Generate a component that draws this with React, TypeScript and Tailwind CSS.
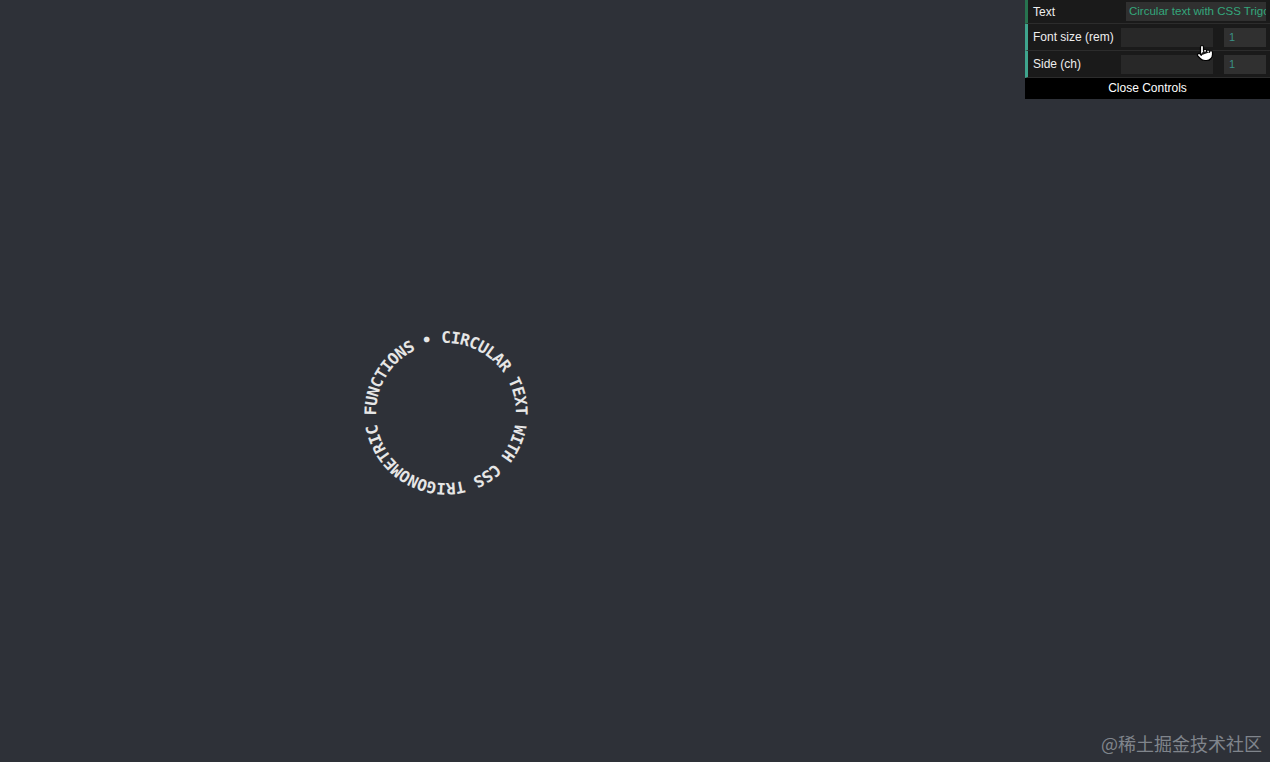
import { Pointer } from "lucide-react";

const TEXT = "CIRCULAR TEXT WITH CSS TRIGONOMETRIC FUNCTIONS • ";
const RADIUS = 75;

function CircularText() {
    const chars = TEXT.split("");
    return (
        <div className="relative w-[166px] h-[166px] text-[16px] font-bold text-[#e6e6e6]" style={{ fontFamily: '"DejaVu Sans Mono", monospace' }}>
            {chars.map((ch, idx) => {
                const angle = (idx * 360) / chars.length;
                return (
                    <span
                        key={idx}
                        className="absolute left-1/2 top-1/2 leading-none whitespace-pre"
                        style={{ transform: `translate(-50%, -50%) rotate(${angle}deg) translateY(-${RADIUS}px)` }}
                    >
                        {ch}
                    </span>
                );
            })}
        </div>
    );
}

function Row({ label, border, children, h }: { label: string; border: string; children: React.ReactNode; h: string }) {
    return (
        <div className={`flex items-center border-l-[3px] border-b border-b-[#2c2c2c] ${border} ${h}`}>
            <div className="w-[93px] pl-[5px] shrink-0 text-[#eeeeee] text-[12px] whitespace-nowrap">{label}</div>
            {children}
        </div>
    );
}

function SliderRow({ label }: { label: string }) {
    return (
        <Row label={label} border="border-l-[#3fa58e]" h="h-[27px]">
            <div className="w-[92px] h-[19px] bg-[#282828] shrink-0" />
            <div className="ml-[11px] w-[42px] h-[19px] bg-[#303030] text-[#3b8f86] pl-[5px] flex items-center">1</div>
        </Row>
    );
}

export default function App() {
    return (
        <div className="relative w-full h-[762px] bg-[#2e3138] overflow-hidden">
            <div className="pl-[363px] pt-[330px]">
                <CircularText />
            </div>

            <div className="absolute top-0 right-0 w-[245px] bg-[#1a1a1a] text-[11px]" style={{ fontFamily: '"Liberation Sans", Arial, sans-serif' }}>
                <Row label="Text" border="border-l-[#27734f]" h="h-[24px]">
                    <div className="ml-[5px] w-[140px] h-[19px] bg-[#303030] text-[#34a77c] text-[11.5px] pl-[3px] flex items-center overflow-hidden whitespace-nowrap">
                        Circular text with CSS Trigonometric Functions
                    </div>
                </Row>
                <SliderRow label="Font size (rem)" />
                <SliderRow label="Side (ch)" />
                <div className="h-[21px] bg-black text-white text-center leading-[21px] text-[12px]">Close Controls</div>
            </div>

            <Pointer className="absolute left-[1196px] top-[44px] w-[18px] h-[18px]" fill="white" stroke="black" strokeWidth={1.6} />

            <div className="absolute right-[8px] bottom-[5px] text-[18px] text-[#80858c]" style={{ fontFamily: '"Noto Sans CJK SC", sans-serif' }}>
                @稀土掘金技术社区
            </div>
        </div>
    );
}
